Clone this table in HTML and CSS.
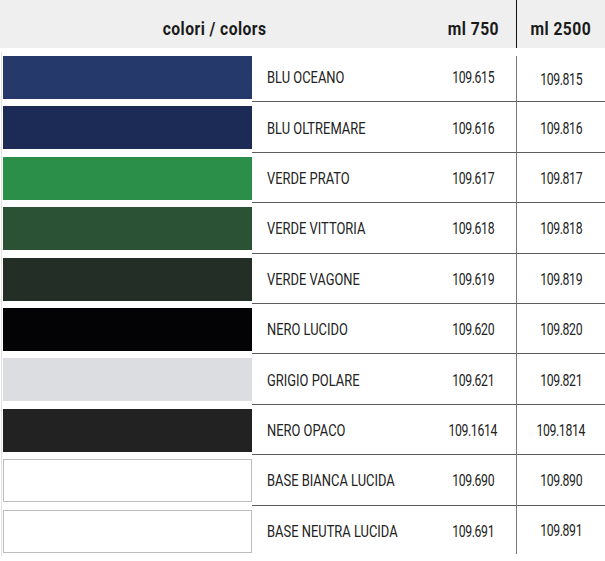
FILE: index.html
```html
<!DOCTYPE html>
<html lang="it">
<head>
<meta charset="utf-8">
<title>colori / colors</title>
<link rel="stylesheet" href="styles.css">
</head>
<body>
<div class="table">
  <div class="head">
    <div class="h-colors"><span class="ht">colori / colors</span></div>
    <div class="h-750"><span class="ht">ml 750</span></div>
    <div class="h-2500"><span class="ht">ml 2500</span></div>
  </div>
  <div class="rows">
    <div class="row"><div class="sw-cell"><div class="swatch" style="background:#253a6b"></div></div><div class="name"><span class="nt">BLU OCEANO</span></div><div class="c750"><span class="num">109.615</span></div><div class="c2500"><span class="num">109.815</span></div></div>
    <div class="row"><div class="sw-cell"><div class="swatch" style="background:#1c2b55"></div></div><div class="name"><span class="nt">BLU OLTREMARE</span></div><div class="c750"><span class="num">109.616</span></div><div class="c2500"><span class="num">109.816</span></div></div>
    <div class="row"><div class="sw-cell"><div class="swatch" style="background:#2b8f49"></div></div><div class="name"><span class="nt">VERDE PRATO</span></div><div class="c750"><span class="num">109.617</span></div><div class="c2500"><span class="num">109.817</span></div></div>
    <div class="row"><div class="sw-cell"><div class="swatch" style="background:#2b5235"></div></div><div class="name"><span class="nt">VERDE VITTORIA</span></div><div class="c750"><span class="num">109.618</span></div><div class="c2500"><span class="num">109.818</span></div></div>
    <div class="row"><div class="sw-cell"><div class="swatch" style="background:#232f26"></div></div><div class="name"><span class="nt">VERDE VAGONE</span></div><div class="c750"><span class="num">109.619</span></div><div class="c2500"><span class="num">109.819</span></div></div>
    <div class="row"><div class="sw-cell"><div class="swatch" style="background:#030305"></div></div><div class="name"><span class="nt">NERO LUCIDO</span></div><div class="c750"><span class="num">109.620</span></div><div class="c2500"><span class="num">109.820</span></div></div>
    <div class="row"><div class="sw-cell"><div class="swatch" style="background:#dcdde0"></div></div><div class="name"><span class="nt">GRIGIO POLARE</span></div><div class="c750"><span class="num">109.621</span></div><div class="c2500"><span class="num">109.821</span></div></div>
    <div class="row"><div class="sw-cell"><div class="swatch" style="background:#222222"></div></div><div class="name"><span class="nt">NERO OPACO</span></div><div class="c750"><span class="num">109.1614</span></div><div class="c2500"><span class="num">109.1814</span></div></div>
    <div class="row"><div class="sw-cell"><div class="swatch swatch-outline"></div></div><div class="name"><span class="nt">BASE BIANCA LUCIDA</span></div><div class="c750"><span class="num">109.690</span></div><div class="c2500"><span class="num">109.890</span></div></div>
    <div class="row"><div class="sw-cell"><div class="swatch swatch-outline"></div></div><div class="name"><span class="nt">BASE NEUTRA LUCIDA</span></div><div class="c750"><span class="num">109.691</span></div><div class="c2500"><span class="num">109.891</span></div></div>
  </div>
</div>
</body>
</html>
```
FILE: styles.css
```css
html, body {
  margin: 0;
  padding: 0;
  background: #ffffff;
}
body {
  font-family: Roboto, "Liberation Sans", sans-serif;
  color: #222222;
}
.table {
  width: 605px;
}
.head {
  display: grid;
  grid-template-columns: 430px 86px 89px;
  height: 48px;
  background: #efefef;
  font-weight: 700;
  font-size: 18px;
  color: #1a1a1a;
}
.head > div {
  display: flex;
  align-items: center;
  justify-content: center;
  padding-top: 8px;
  box-sizing: border-box;
}
.ht {
  display: inline-block;
  white-space: nowrap;
  letter-spacing: 0.5px;
  transform: scaleX(0.87);
  transform-origin: center;
}
.h-2500 {
  border-left: 1px solid #111111;
}
.rows {
  margin-top: 4px;
  margin-left: 1px;
  border-left: 1px solid #e2e2e2;
}
.row {
  display: grid;
  grid-template-columns: 250px 178px 86px 89px;
  height: 50.4px;
  font-size: 17px;
}
.sw-cell {
  padding: 4px 0 0 1px;
}
.swatch {
  height: 43px;
  width: 249px;
  box-sizing: border-box;
}
.swatch-outline {
  background: #ffffff;
  border: 1px solid #bdbdbd;
}
.name, .c750, .c2500 {
  display: flex;
  align-items: center;
  padding-top: 1px;
  box-sizing: border-box;
  border-bottom: 1px solid #5c5c5c;
}
.row:last-child .name,
.row:last-child .c750,
.row:last-child .c2500 {
  border-bottom: none;
}
.name {
  padding-left: 15px;
}
.nt {
  display: inline-block;
  white-space: nowrap;
  transform: scaleX(0.76);
  transform-origin: left center;
}
.c750, .c2500 {
  justify-content: center;
}
.num {
  display: inline-block;
  white-space: nowrap;
  letter-spacing: -0.5px;
  transform: scaleX(0.72);
  transform-origin: center;
}
.c2500 {
  border-left: 1px solid #777777;
}
.row:first-child .c2500 {
  margin-top: 4px;
}
.row:last-child .c2500 {
  margin-bottom: 2px;
}
```
